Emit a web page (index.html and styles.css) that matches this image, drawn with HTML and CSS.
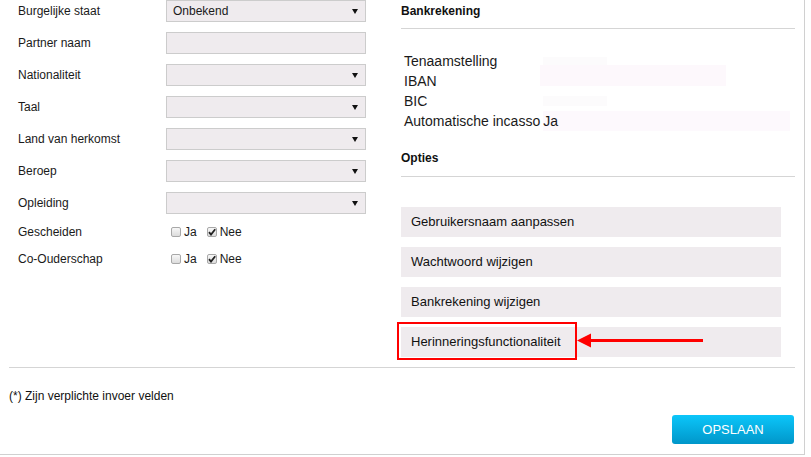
FILE: index.html
```html
<!DOCTYPE html>
<html lang="nl">
<head>
<meta charset="utf-8">
<title>Profiel</title>
<link rel="stylesheet" href="styles.css">
</head>
<body>
<div class="page">
  <div class="main">
    <div class="left">
      <div class="form-row"><span class="label">Burgelijke staat</span><div class="select"><span class="select-text">Onbekend</span><span class="caret"></span></div></div>
      <div class="form-row"><span class="label">Partner naam</span><div class="input"></div></div>
      <div class="form-row"><span class="label">Nationaliteit</span><div class="select"><span class="select-text"></span><span class="caret"></span></div></div>
      <div class="form-row"><span class="label">Taal</span><div class="select"><span class="select-text"></span><span class="caret"></span></div></div>
      <div class="form-row"><span class="label">Land van herkomst</span><div class="select"><span class="select-text"></span><span class="caret"></span></div></div>
      <div class="form-row"><span class="label">Beroep</span><div class="select"><span class="select-text"></span><span class="caret"></span></div></div>
      <div class="form-row"><span class="label">Opleiding</span><div class="select"><span class="select-text"></span><span class="caret"></span></div></div>
      <div class="check-row"><span class="label">Gescheiden</span><div class="checks"><span class="cb"></span><span class="cb-text">Ja</span><span class="cb checked"><svg viewBox="0 0 10 10" width="10" height="10"><path d="M2 5.2 L4 7.6 L8.2 2.2" fill="none" stroke="#222" stroke-width="1.8"/></svg></span><span class="cb-text">Nee</span></div></div>
      <div class="check-row"><span class="label">Co-Ouderschap</span><div class="checks"><span class="cb"></span><span class="cb-text">Ja</span><span class="cb checked"><svg viewBox="0 0 10 10" width="10" height="10"><path d="M2 5.2 L4 7.6 L8.2 2.2" fill="none" stroke="#222" stroke-width="1.8"/></svg></span><span class="cb-text">Nee</span></div></div>
    </div>
    <div class="right">
      <div class="section-title">Bankrekening</div>
      <div class="bank">
        <span class="bank-label">Tenaamstelling</span><span class="bank-value"><span class="blur blur-name"></span></span>
        <span class="bank-label">IBAN</span><span class="bank-value"><span class="blur blur-iban"></span></span>
        <span class="bank-label">BIC</span><span class="bank-value"><span class="blur blur-bic"></span></span>
        <span class="bank-label">Automatische incasso</span><span class="bank-value bank-ja">Ja</span>
      </div>
      <div class="section-title opties">Opties</div>
      <ul class="options">
        <li class="option">Gebruikersnaam aanpassen</li>
        <li class="option">Wachtwoord wijzigen</li>
        <li class="option">Bankrekening wijzigen</li>
        <li class="option highlighted">Herinneringsfunctionaliteit
          <span class="highlight-box"></span>
          <svg class="arrow" width="126" height="15" viewBox="0 0 126 15"><polygon points="0,7.5 14,0.5 14,14.5" fill="#ff0000"/><rect x="13" y="6" width="113" height="3" fill="#ff0000"/></svg>
        </li>
      </ul>
    </div>
  </div>
  <div class="sep"></div>
  <p class="note">(*) Zijn verplichte invoer velden</p>
  <div class="actions"><button class="save" type="button">OPSLAAN</button></div>
</div>
</body>
</html>
```

FILE: styles.css
```css
* { box-sizing: border-box; }
html, body { margin: 0; padding: 0; background: #fff; }
body {
  font-family: "Liberation Sans", Arial, sans-serif;
  color: #1a1a1a;
}
.page {
  width: 805px;
  height: 455px;
  padding: 0 9px 10px 9px;
  border-right: 1px solid #d0d0d0;
  border-bottom: 1px solid #d0d0d0;
  display: flex;
  flex-direction: column;
}
.main {
  display: grid;
  grid-template-columns: 381px 1fr;
}
/* left form */
.left { padding-left: 9px; }
.form-row {
  display: flex;
  align-items: center;
  height: 22px;
  margin-bottom: 10px;
}
.label {
  width: 148px;
  font-size: 12px;
  flex: none;
}
.select, .input {
  width: 200px;
  height: 22px;
  background: #efebee;
  border: 1px solid #cccccc;
  display: flex;
  align-items: center;
  padding-left: 6px;
  font-size: 12px;
}
.caret {
  margin-left: auto;
  margin-right: 7px;
  width: 0;
  height: 0;
  border-left: 3px solid transparent;
  border-right: 3px solid transparent;
  border-top: 5px solid #111;
}
.check-row {
  display: flex;
  align-items: center;
  height: 16px;
  margin-bottom: 11px;
}
.check-row:first-of-type { margin-top: 1px; }
.checks {
  display: flex;
  align-items: center;
  padding-left: 5px;
  font-size: 12px;
}
.cb {
  width: 10px;
  height: 10px;
  border: 1px solid #a8a8a8;
  border-radius: 2px;
  background: linear-gradient(#f7f7f7, #dcdcdc);
  display: flex;
  align-items: center;
  justify-content: center;
  overflow: hidden;
}
.cb svg { display: block; flex: none; }
.cb-text { margin-left: 3px; margin-right: 10px; }
/* right column */
.section-title {
  margin-left: 11px;
  padding-top: 1px;
  padding-bottom: 7px;
  line-height: 20px;
  font-size: 12px;
  font-weight: bold;
  color: #111;
  border-bottom: 1px solid #d5d5d5;
}
.section-title.opties { margin-top: 17px; padding-top: 0; padding-bottom: 8px; }
.bank {
  margin-top: 22px;
  padding-left: 14px;
  display: grid;
  grid-template-columns: auto 1fr;
  column-gap: 3px;
  font-size: 14px;
  line-height: 20px;
}
.bank-value { position: relative; }
.blur { display: block; }
.blur-name { width: 64px; height: 10px; margin-top: 6px; background: #fcfbfc; }
.blur-iban { width: 186px; height: 21px; margin-top: -6px; margin-left: -3px; background: #fdf8fc; }
.blur-bic { width: 64px; height: 10px; margin-top: 5px; background: #fcfbfc; }
.bank-ja {
  width: 247px;
  background: #fdf9fd;
}
.options {
  list-style: none;
  margin: 30px 0 0 11px;
  padding: 0;
}
.option {
  width: 380px;
  height: 30px;
  line-height: 30px;
  margin-bottom: 10px;
  padding-left: 10px;
  background: #efebee;
  font-size: 13px;
  color: #111;
  position: relative;
}
.highlight-box {
  position: absolute;
  left: -4px;
  top: -5px;
  width: 180px;
  height: 38px;
  border: 2px solid #ff0000;
}
.arrow {
  position: absolute;
  left: 176px;
  top: 6px;
  display: block;
}
.sep {
  border-top: 1px solid #d5d5d5;
  height: 0;
}
.note {
  margin: 20px 0 0 0;
  font-size: 12px;
  line-height: 16px;
  color: #111;
}
.actions {
  margin-top: auto;
  display: flex;
  justify-content: flex-end;
  padding-right: 1px;
}
.save {
  width: 122px;
  height: 29px;
  border: none;
  border-radius: 3px;
  background: linear-gradient(#0cc6fa, #0096c9);
  color: #fff;
  font-family: "Liberation Sans", Arial, sans-serif;
  font-size: 13px;
  padding: 0;
}
```
